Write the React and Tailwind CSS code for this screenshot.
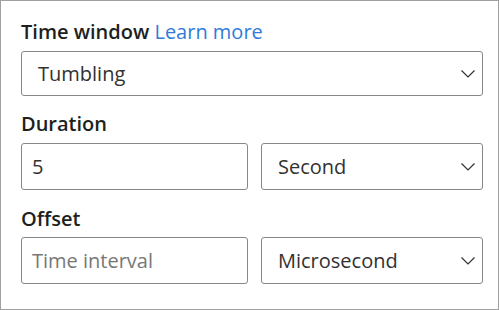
import React from 'react';

const Chevron = () => (
  <svg width="14" height="8" viewBox="0 0 14 8" fill="none" className="shrink-0">
    <path d="M0.5 0.5 L7 7 L13.5 0.5" stroke="#323130" strokeWidth="1.2" />
  </svg>
);

const Select = ({ value, className = '' }) => (
  <div className={`flex items-center justify-between rounded-[3px] border border-[#8a8886] bg-white pl-4 pr-[7px] text-[20px] text-[#323130] ${className}`}>
    <span>{value}</span>
    <Chevron />
  </div>
);

const Input = ({ value, placeholder }) => (
  <div className="flex h-[47px] w-[227px] items-center rounded-[3px] border border-[#8a8886] bg-white px-[10px] text-[20px]">
    {value ? <span className="text-[#323130]">{value}</span> : <span className="text-[#797775]">{placeholder}</span>}
  </div>
);

export default function App() {
  return (
    <div
      className="box-border flex h-[310px] w-[499px] flex-col border border-[#a0a0a0] bg-white px-5 pt-[17px]"
      style={{ fontFamily: '"Open Sans", "Noto Sans", sans-serif' }}
    >
      {/* Time window */}
      <div className="text-[20px] font-semibold leading-[28px] text-[#201f1e]">
        Time window <span className="font-normal text-[#2f7bd9]">Learn more</span>
      </div>
      <Select value="Tumbling" className="mt-[5px] h-[45px] w-[462px]" />

      {/* Duration */}
      <div className="mt-[14px] text-[20px] font-semibold leading-[28px] text-[#201f1e]">Duration</div>
      <div className="mt-[5px] flex w-[462px] gap-[13px]">
        <Input value="5" />
        <Select value="Second" className="h-[47px] w-[222px]" />
      </div>

      {/* Offset */}
      <div className="mt-[15px] text-[20px] font-semibold leading-[28px] text-[#201f1e]">Offset</div>
      <div className="mt-[4px] flex w-[462px] gap-[13px]">
        <Input placeholder="Time interval" />
        <Select value="Microsecond" className="h-[47px] w-[222px]" />
      </div>
    </div>
  );
}
